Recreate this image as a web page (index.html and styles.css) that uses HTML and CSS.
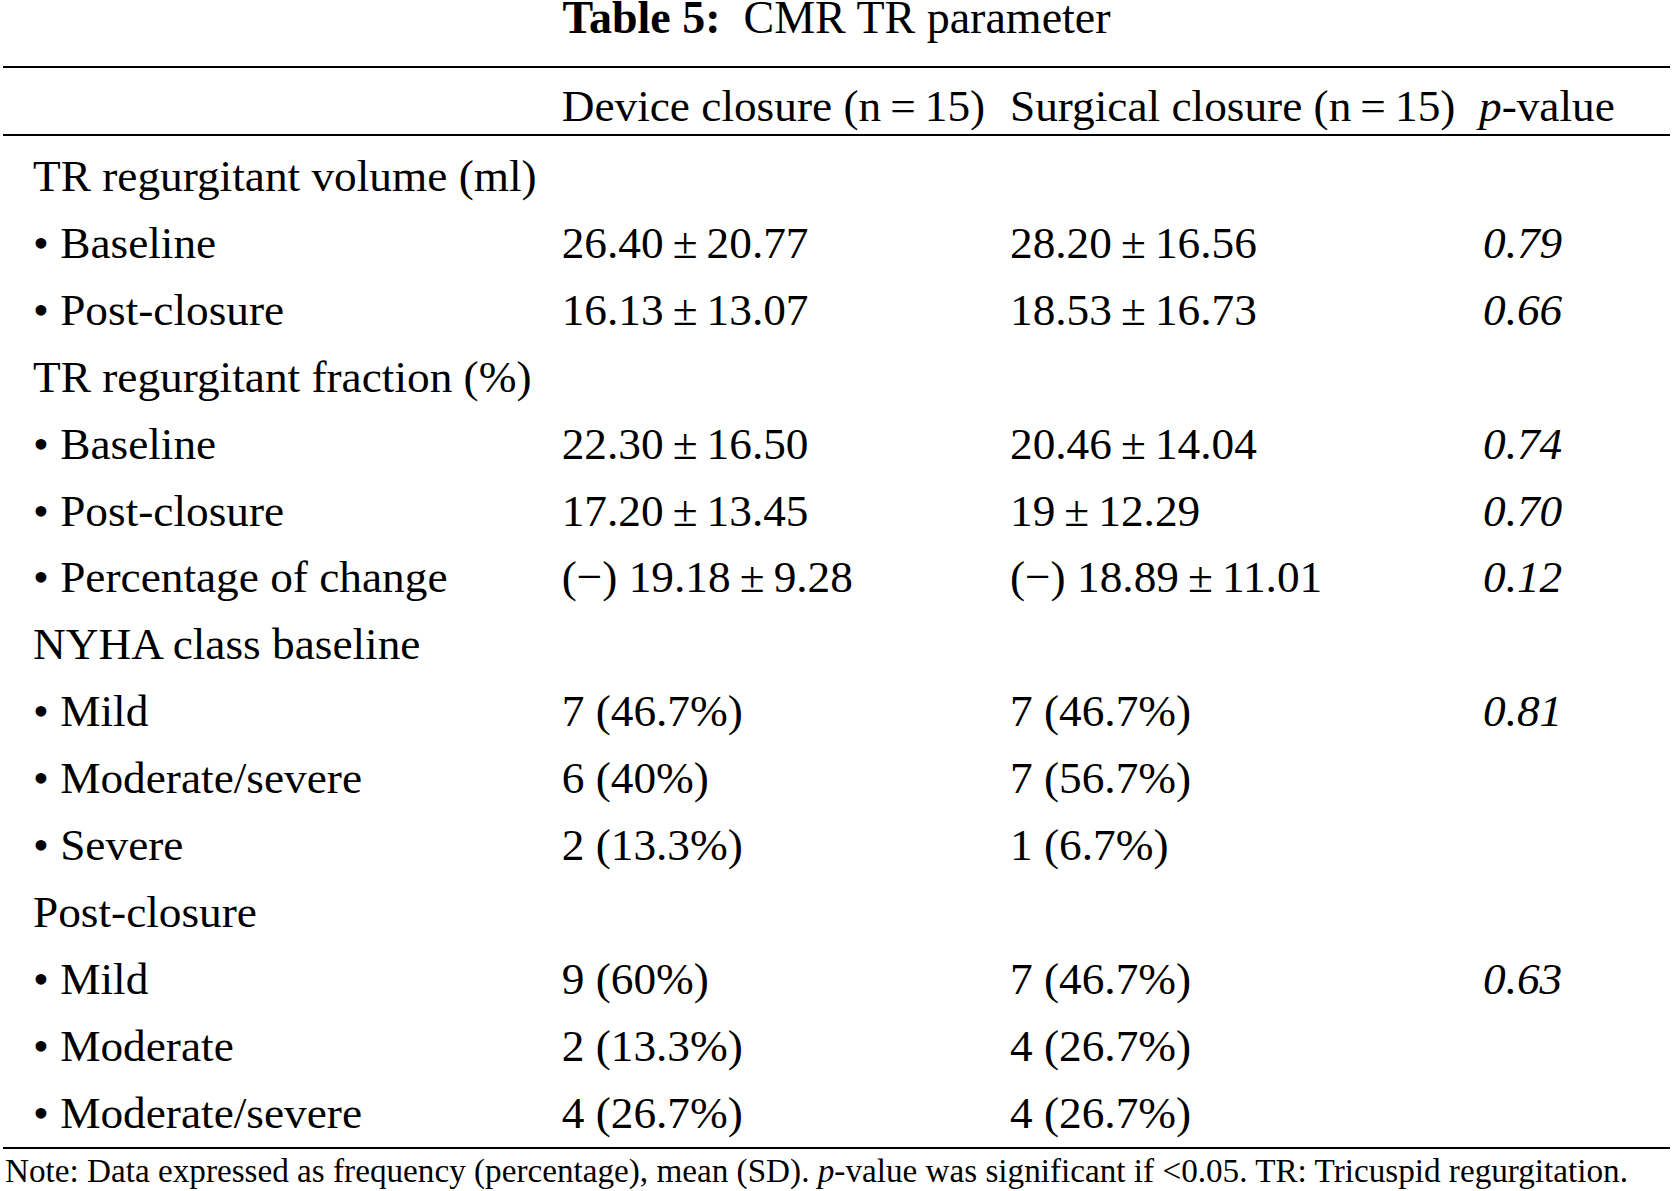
FILE: index.html
```html
<!DOCTYPE html>
<html lang="en">
<head>
<meta charset="utf-8">
<title>Table 5: CMR TR parameter</title>
<link rel="stylesheet" href="styles.css">
</head>
<body>
<div class="page">
  <div class="title"><b>Table 5:</b>&nbsp; CMR TR parameter</div>
  <table class="data">
    <colgroup>
      <col class="c1"><col class="c2"><col class="c3"><col class="c4">
    </colgroup>
    <thead>
      <tr>
        <th class="label"></th>
        <th>Device closure (n&#8201;=&#8201;15)</th>
        <th>Surgical closure (n&#8201;=&#8201;15)</th>
        <th><i>p</i>-value</th>
      </tr>
    </thead>
    <tbody>
      <tr class="first"><td class="label">TR regurgitant volume (ml)</td><td></td><td></td><td></td></tr>
      <tr><td class="label">• Baseline</td><td>26.40&#8201;±&#8201;20.77</td><td>28.20&#8201;±&#8201;16.56</td><td class="p">0.79</td></tr>
      <tr><td class="label">• Post-closure</td><td>16.13&#8201;±&#8201;13.07</td><td>18.53&#8201;±&#8201;16.73</td><td class="p">0.66</td></tr>
      <tr><td class="label">TR regurgitant fraction (%)</td><td></td><td></td><td></td></tr>
      <tr><td class="label">• Baseline</td><td>22.30&#8201;±&#8201;16.50</td><td>20.46&#8201;±&#8201;14.04</td><td class="p">0.74</td></tr>
      <tr><td class="label">• Post-closure</td><td>17.20&#8201;±&#8201;13.45</td><td>19&#8201;±&#8201;12.29</td><td class="p">0.70</td></tr>
      <tr><td class="label">• Percentage of change</td><td>(−) 19.18&#8201;±&#8201;9.28</td><td>(−) 18.89&#8201;±&#8201;11.01</td><td class="p">0.12</td></tr>
      <tr><td class="label">NYHA class baseline</td><td></td><td></td><td></td></tr>
      <tr><td class="label">• Mild</td><td>7 (46.7%)</td><td>7 (46.7%)</td><td class="p">0.81</td></tr>
      <tr><td class="label">• Moderate/severe</td><td>6 (40%)</td><td>7 (56.7%)</td><td></td></tr>
      <tr><td class="label">• Severe</td><td>2 (13.3%)</td><td>1 (6.7%)</td><td></td></tr>
      <tr><td class="label">Post-closure</td><td></td><td></td><td></td></tr>
      <tr><td class="label">• Mild</td><td>9 (60%)</td><td>7 (46.7%)</td><td class="p">0.63</td></tr>
      <tr><td class="label">• Moderate</td><td>2 (13.3%)</td><td>4 (26.7%)</td><td></td></tr>
      <tr><td class="label">• Moderate/severe</td><td>4 (26.7%)</td><td>4 (26.7%)</td><td></td></tr>
    </tbody>
  </table>
  <p class="note">Note: Data expressed as frequency (percentage), mean (SD). <i>p</i>-value was significant if &lt;0.05. TR: Tricuspid regurgitation.</p>
</div>
</body>
</html>
```

FILE: styles.css
```css
html, body {
  margin: 0;
  padding: 0;
  background: #ffffff;
}

.page {
  width: 1667px;
  margin-left: 3px;
  font-family: "Liberation Serif", "Times New Roman", serif;
  color: #000000;
}

.title {
  text-align: center;
  font-size: 46px;
  line-height: 33px;
  height: 33px;
  padding-top: 1px;
  margin-bottom: 32px;
  white-space: pre;
}

.title b {
  font-weight: bold;
}

.data {
  width: 1667px;
  border-collapse: collapse;
  table-layout: fixed;
  font-size: 45.3px;
  border-top: 2px solid #000;
  border-bottom: 2px solid #000;
}

.c1 { width: 558.7px; }
.c2 { width: 448.3px; }
.c3 { width: 469px; }
.c4 { width: auto; }

.data th,
.data td {
  padding: 0;
  text-align: left;
  white-space: nowrap;
  font-weight: normal;
  vertical-align: top;
}

.data thead th {
  line-height: 56px;
  padding-top: 10px;
  border-bottom: 2px solid #000;
}

.data tbody td {
  line-height: 66.9px;
}

.data td.label {
  padding-left: 30px;
}

.data tr.first td {
  padding-top: 7px;
}

.data td.p {
  padding-left: 4px;
  font-style: italic;
}

.note {
  margin: 0;
  padding-left: 2px;
  font-size: 33.2px;
  line-height: 40px;
  padding-top: 2px;
  white-space: nowrap;
}
```
